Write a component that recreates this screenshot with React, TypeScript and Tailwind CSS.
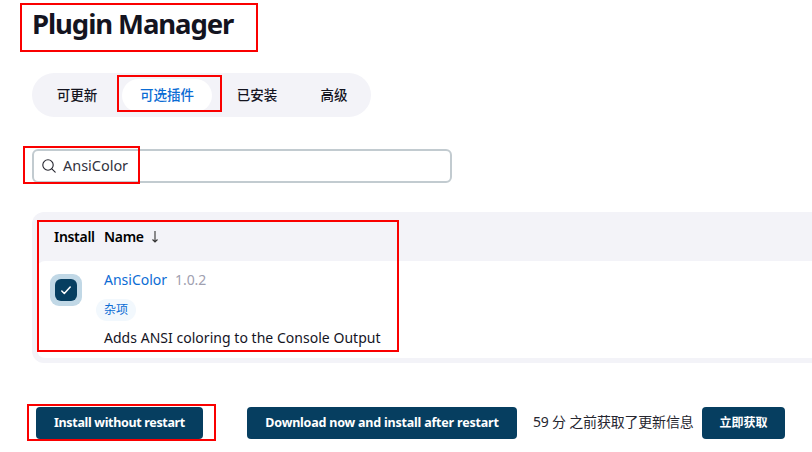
import React from "react";

const tabs = [
  { label: "可更新", width: "w-[90px]" },
  { label: "可选插件", width: "w-[90px]", active: true },
  { label: "已安装", width: "w-[90px]" },
  { label: "高级", width: "w-[64px]" },
];

function SearchIcon() {
  return (
    <svg width="14" height="14" viewBox="0 0 14 14" fill="none" stroke="#26262f" strokeWidth="1.1" strokeLinecap="round">
      <circle cx="6" cy="6" r="5.2" />
      <path d="M9.8 9.8 L13.2 13.2" />
    </svg>
  );
}

function Highlight({ className }: { className: string }) {
  return <div className={`pointer-events-none absolute border-2 border-[#fa0000] ${className}`} />;
}

function Button({ className, children }: { className: string; children: React.ReactNode }) {
  return (
    <button
      className={`flex h-8 shrink-0 items-center justify-center rounded bg-[#063e60] font-bold whitespace-nowrap text-white ${className}`}
    >
      {children}
    </button>
  );
}

export default function App() {
  return (
    <div className="relative h-[452px] w-[812px] overflow-hidden bg-white pl-8 font-['Noto_Sans','Noto_Sans_CJK_SC',sans-serif] text-[#14141f]">
      <h1 className="h-[73px] pt-1 text-[27.5px] leading-10 font-bold tracking-[-1.1px] whitespace-nowrap">Plugin Manager</h1>

      <nav className="flex h-11 w-[339px] items-center rounded-full bg-[#f3f3f8]">
        {tabs.map((t) => (
          <button
            key={t.label}
            className={`flex h-[33px] shrink-0 items-center justify-center rounded-full text-[13.5px] font-medium whitespace-nowrap ${t.width} ${
              t.active ? "bg-white text-[#0b6cd4]" : ""
            }`}
          >
            {t.label}
          </button>
        ))}
      </nav>

      <div className="mt-8 flex h-[34px] w-[420px] items-center gap-[7px] rounded-md border-2 border-[#c2cbd0] pl-2 text-[14.5px] text-[#333340]">
        <SearchIcon />
        <span className="tracking-[-0.03px]">AnsiColor</span>
      </div>

      <section className="mt-[29px] h-[151px] w-[800px] rounded-xl bg-[#f3f3f8] px-[5px] pb-[5px]">
        <div className="flex h-[49px] items-center pl-[17px] text-[14px] font-semibold text-black">
          <span className="w-[50px] tracking-[-0.3px]">Install</span>
          <span className="tracking-[-0.3px]">Name</span>
          <svg className="ml-[7px]" width="8" height="12" viewBox="0 0 8 12" fill="none" stroke="#333" strokeWidth="1.1">
            <path d="M4 0V11M1.5 8.5L4 11L6.5 8.5" />
          </svg>
        </div>
        <div className="flex h-[97px] rounded-lg bg-white pl-[13px] text-[14px]">
          <div className="mt-[13px] flex size-8 shrink-0 items-center justify-center rounded-[9px] bg-[#c1d8e6]">
            <div className="flex size-[22px] items-center justify-center rounded-md bg-[#063e60]">
              <svg width="10" height="9" viewBox="0 0 10 9" fill="none" stroke="white" strokeWidth="1.5" strokeLinecap="round" strokeLinejoin="round">
                <path d="M0.8 5L3.3 7.5L9.2 1" />
              </svg>
            </div>
          </div>
          <div className="flex flex-col pl-[22px]">
            <div className="mt-2 flex h-5 items-center gap-2">
              <a className="text-[#0b6cd4]">AnsiColor</a>
              <span className="tracking-[-0.1px] text-[#a0a0b0]">1.0.2</span>
            </div>
            <span className="mt-[10px] -ml-2 flex h-[22px] w-10 items-center justify-center rounded-full bg-[#f2f8fd] text-[12px] text-[#0b6cd4]">
              杂项
            </span>
            <p className="mt-[7px] h-5 leading-5 tracking-[0.03px] whitespace-nowrap">Adds ANSI coloring to the Console Output</p>
          </div>
        </div>
      </section>

      <footer className="mt-11 flex h-8 items-center pl-1">
        <Button className="w-[167px] text-[12.5px] tracking-[-0.33px]">Install without restart</Button>
        <Button className="ml-11 w-[270px] text-[12.5px] tracking-[-0.2px]">Download now and install after restart</Button>
        <span className="mb-1 ml-4 w-[169px] shrink-0 text-[14px] tracking-[-0.2px] whitespace-nowrap text-[#26262f]">
          59 分 之前获取了更新信息
        </span>
        <Button className="w-[83px] text-[12px]">立即获取</Button>
      </footer>

      <Highlight className="top-[3px] left-5 h-[49px] w-[238px]" />
      <Highlight className="top-[75px] left-[117px] h-[37px] w-[105px]" />
      <Highlight className="top-[146px] left-[23px] h-[38px] w-[117px]" />
      <Highlight className="top-[220px] left-[37px] h-[132px] w-[362px]" />
      <Highlight className="top-[404px] left-[27px] h-[37px] w-[189px]" />
    </div>
  );
}
